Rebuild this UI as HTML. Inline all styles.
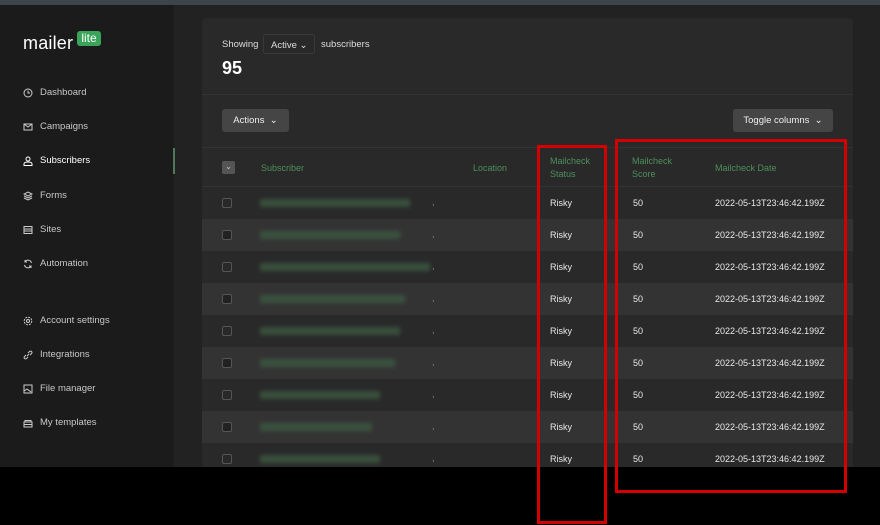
<!DOCTYPE html>
<html><head><meta charset="utf-8"><style>
*{margin:0;padding:0;box-sizing:border-box}
body{width:880px;height:525px;overflow:hidden;background:#000;font-family:"Liberation Sans",sans-serif;position:relative;color:#e6e6e6}
.a{position:absolute}
.top{left:0;top:0;width:880px;height:5px;background:#3d454c}
.side{left:0;top:5px;width:174px;height:462px;background:#1b1b1b}
.main{left:174px;top:5px;width:706px;height:462px;background:#222}
.card{left:202px;top:18px;width:651px;height:449px;background:#292929;border-radius:4px}
.nav{left:23px;font-size:9.5px;color:#c8c8c8;display:flex;align-items:center;gap:7px}
.nav svg{width:10px;height:10px}
.btn{background:#454545;border-radius:3px;font-size:9.5px;color:#eee;display:flex;align-items:center;justify-content:center}
.hd{font-size:9px;color:#4d8f5a;line-height:12.5px}
.row{left:202px;width:651px;height:32px}
.cell{font-size:9px;color:#e8e8e8}
.cb{width:10px;height:10px;border:1px solid #555;border-radius:2px}
.blur{height:8px;background:#3d5a43;filter:blur(2px);opacity:.8}
.red{border:3px solid #d40000}
</style></head><body>
<div class="a top"></div>
<div class="a side"></div>
<div class="a main"></div>
<div class="a" style="left:173px;top:148px;width:2px;height:26px;background:#4f7a58"></div>
<div class="a" style="left:23px;top:33px;font-size:18px;color:#fff;letter-spacing:.2px">mailer</div>
<div class="a" style="left:77px;top:31px;width:24px;height:15px;background:#3aa55a;border-radius:3px;font-size:12px;color:#fff;text-align:center;line-height:14px">lite</div>
<div class="a nav" style="top:87px"><svg viewBox="0 0 10 10" fill="none" stroke="#ccc"><circle cx="5" cy="5" r="4"/><path d="M5 2.5V5h2"/></svg>Dashboard</div>
<div class="a nav" style="top:121px"><svg viewBox="0 0 10 10" fill="none" stroke="#ccc"><rect x="1" y="2" width="8" height="6"/><path d="M1 2l4 3 4-3"/></svg>Campaigns</div>
<div class="a nav" style="top:155px;color:#fff"><svg viewBox="0 0 10 10" fill="none" stroke="#fff"><circle cx="5" cy="3" r="2"/><path d="M1 9.5V8q0-2 4-2t4 2v1.5z"/></svg>Subscribers</div>
<div class="a nav" style="top:190px"><svg viewBox="0 0 10 10" fill="none" stroke="#ccc"><path d="M5 1l4 2-4 2-4-2zM1 5l4 2 4-2M1 7l4 2 4-2"/></svg>Forms</div>
<div class="a nav" style="top:224px"><svg viewBox="0 0 10 10" fill="none" stroke="#ccc"><rect x="1" y="1.5" width="8" height="7"/><path d="M1 4h8M1 6h8"/></svg>Sites</div>
<div class="a nav" style="top:258px"><svg viewBox="0 0 10 10" fill="none" stroke="#ccc"><path d="M8.5 4A3.5 3.5 0 0 0 2 3M1.5 6A3.5 3.5 0 0 0 8 7M2 1v2h2M8 9V7H6"/></svg>Automation</div>
<div class="a nav" style="top:315px"><svg viewBox="0 0 10 10" fill="none" stroke="#ccc"><circle cx="5" cy="5" r="1.5"/><circle cx="5" cy="5" r="3.8" stroke-dasharray="2 1"/></svg>Account settings</div>
<div class="a nav" style="top:349px"><svg viewBox="0 0 10 10" fill="none" stroke="#ccc"><path d="M4 6l2-2M3 5L1.5 6.5a1.4 1.4 0 0 0 2 2L5 7M7 5l1.5-1.5a1.4 1.4 0 0 0-2-2L5 3"/></svg>Integrations</div>
<div class="a nav" style="top:383px"><svg viewBox="0 0 10 10" fill="none" stroke="#ccc"><rect x="1" y="1" width="8" height="8"/><path d="M1 7l3-2 4 3"/></svg>File manager</div>
<div class="a nav" style="top:417px"><svg viewBox="0 0 10 10" fill="none" stroke="#ccc"><path d="M2 4V2.5h6V4M1 4h8v5H1zM1 6.5h8"/></svg>My templates</div>

<div class="a card"></div>
<div class="a" style="left:222px;top:39px;font-size:9.5px;color:#ddd">Showing</div>
<div class="a" style="left:263px;top:34px;width:52px;height:20px;border:1px solid #3a3a3a;border-radius:3px;font-size:9.5px;color:#ddd;padding:5px 0 0 7px">Active ⌄</div>
<div class="a" style="left:321px;top:39px;font-size:9.5px;color:#ddd">subscribers</div>
<div class="a" style="left:222px;top:58px;font-size:18px;font-weight:bold;color:#fff">95</div>
<div class="a" style="left:202px;top:94px;width:651px;height:1px;background:#333"></div>
<div class="a btn" style="left:222px;top:109px;width:67px;height:23px">Actions &nbsp;⌄</div>
<div class="a btn" style="left:733px;top:109px;width:100px;height:23px">Toggle columns &nbsp;⌄</div>
<div class="a" style="left:202px;top:147px;width:651px;height:1px;background:#333"></div>
<div class="a" style="left:222px;top:161px;width:13px;height:13px;background:#555;border-radius:2px;font-size:8px;text-align:center;line-height:12px;color:#ccc">⌄</div>
<div class="a hd" style="left:261px;top:162px">Subscriber</div>
<div class="a hd" style="left:473px;top:162px">Location</div>
<div class="a hd" style="left:550px;top:155px">Mailcheck<br>Status</div>
<div class="a hd" style="left:632px;top:155px">Mailcheck<br>Score</div>
<div class="a hd" style="left:715px;top:162px">Mailcheck Date</div>
<div class="a" style="left:202px;top:186px;width:651px;height:1px;background:#333"></div>

<div id="rows"></div>
<script>
var h='';var ws=[150,140,170,145,140,135,120,112,120];
for(var i=0;i<9;i++){var t=187+i*32;var bg=i%2?'#333':'#292929';
h+='<div class="a row" style="top:'+t+'px;background:'+bg+'"></div>';
h+='<div class="a cb" style="left:222px;top:'+(t+11)+'px;'+(i%2?'background:#222;':'')+'"></div>';
h+='<div class="a blur" style="left:260px;top:'+(t+12)+'px;width:'+ws[i]+'px"></div>';
h+='<div class="a cell" style="left:432px;top:'+(t+10)+'px;color:#888">,</div>';
h+='<div class="a cell" style="left:550px;top:'+(t+11)+'px">Risky</div>';
h+='<div class="a cell" style="left:633px;top:'+(t+11)+'px">50</div>';
h+='<div class="a cell" style="left:715px;top:'+(t+11)+'px">2022-05-13T23:46:42.199Z</div>';}
document.getElementById('rows').innerHTML=h;
</script>
<div class="a" style="left:0;top:467px;width:880px;height:58px;background:#000"></div>
<div class="a red" style="left:537px;top:145px;width:70px;height:379px"></div>
<div class="a red" style="left:615px;top:139px;width:232px;height:354px"></div>
</body></html>
